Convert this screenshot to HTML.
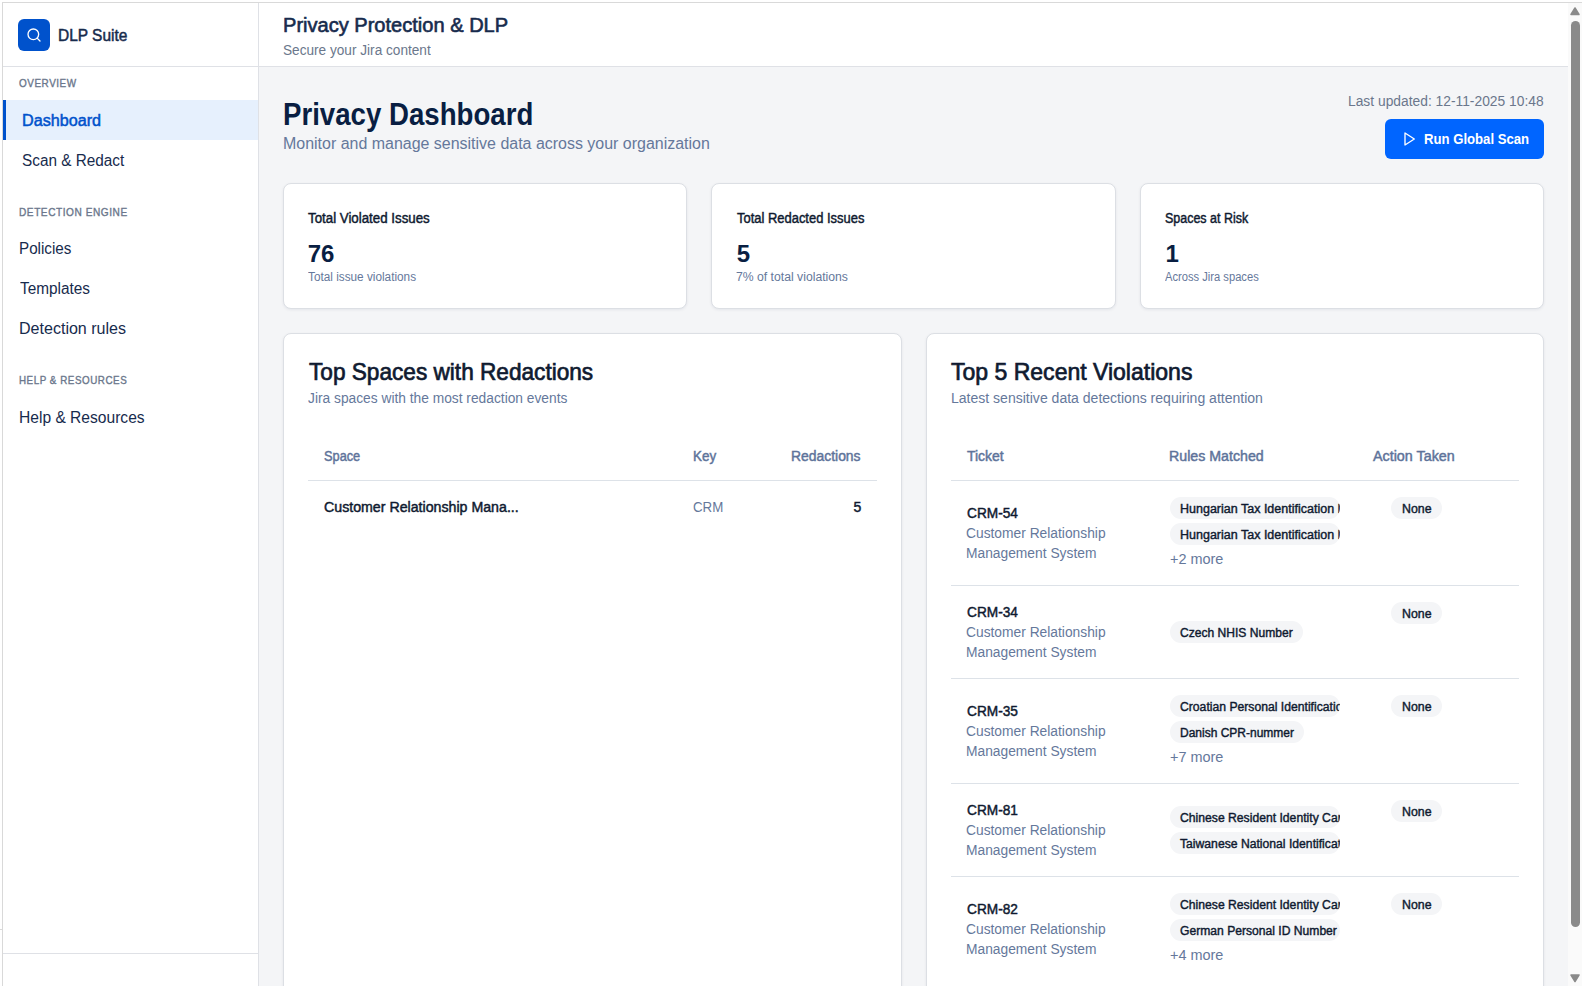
<!DOCTYPE html>
<html><head><meta charset="utf-8"><style>
*{box-sizing:border-box;margin:0;padding:0}
html,body{width:1582px;height:986px;overflow:hidden;background:#fff;font-family:"Liberation Sans",sans-serif}
.a{position:absolute}
.tx{position:absolute;white-space:nowrap;transform-origin:0 0}
.card{position:absolute;background:#fff;border:1px solid #DCDFE4;border-radius:8px;box-shadow:0 1px 3px rgba(9,30,66,0.07)}
.hl{position:absolute;height:1px;background:#DDE2E8}
.chip{position:absolute;height:22px;border-radius:11px;background:#F4F5F7;overflow:hidden;white-space:nowrap}
.ct{position:absolute;white-space:nowrap;transform-origin:0 0;font-size:12px;line-height:12px;font-weight:400;-webkit-text-stroke:0.4px #0F1A30;color:#0F1A30}
</style></head><body>
<div class="a" style="left:2px;top:2px;width:1580px;height:1px;background:#D9D9D9"></div>
<div class="a" style="left:2px;top:2px;width:1px;height:984px;background:#D9D9D9"></div>
<div class="a" style="left:0;top:929px;width:2px;height:1px;background:#D9D9D9"></div>
<div class="a" style="left:258px;top:3px;width:1px;height:983px;background:#DFE1E6"></div>
<div class="a" style="left:3px;top:66px;width:255px;height:1px;background:#DFE1E6"></div>
<div class="a" style="left:3px;top:953px;width:255px;height:1px;background:#DFE1E6"></div>
<div class="a" style="left:18px;top:19px;width:32px;height:32px;border-radius:6px;background:#0052CC"></div>
<svg class="a" style="left:26px;top:27px" width="16" height="16" viewBox="0 0 24 24" fill="none" stroke="#fff" stroke-width="2" stroke-linecap="round" stroke-linejoin="round"><circle cx="11" cy="11" r="8"/><path d="M21 21l-4.35-4.35"/></svg>
<div class="a" style="left:3px;top:100px;width:255px;height:40px;background:#E6F0FD"></div>
<div class="a" style="left:3px;top:100px;width:3px;height:40px;background:#0052CC"></div>
<div class="a" style="left:259px;top:66px;width:1309px;height:1px;background:#DFE1E6"></div>
<div class="a" style="left:259px;top:67px;width:1309px;height:919px;background:#F4F5F7"></div>
<div class="a" style="left:1568px;top:3px;width:14px;height:983px;background:#FAFAFA"></div>
<svg class="a" style="left:1568px;top:3px" width="14" height="983"><path d="M7 5 L11 11.5 L3 11.5 Z" fill="#8A8A8A" stroke="#8A8A8A" stroke-width="1.5" stroke-linejoin="round"/><rect x="3" y="18" width="9" height="906" rx="4.5" fill="#8A8A8A"/><path d="M7 978.5 L11 972 L3 972 Z" fill="#8A8A8A" stroke="#8A8A8A" stroke-width="1.5" stroke-linejoin="round"/></svg>
<div class="a" style="left:1385px;top:119px;width:159px;height:40px;border-radius:6px;background:#0065FF"></div>
<svg class="a" style="left:1401px;top:131px" width="16" height="16" viewBox="0 0 24 24" fill="none" stroke="#fff" stroke-width="2" stroke-linecap="round" stroke-linejoin="round"><polygon points="6 3 20 12 6 21 6 3"/></svg>
<div class="card" style="left:283px;top:183px;width:404px;height:126px"></div>
<div class="card" style="left:711px;top:183px;width:405px;height:126px"></div>
<div class="card" style="left:1140px;top:183px;width:404px;height:126px"></div>
<div class="card" style="left:283px;top:333px;width:619px;height:700px"></div>
<div class="card" style="left:926px;top:333px;width:618px;height:700px"></div>
<div class="hl" style="left:308px;top:480px;width:569px"></div>
<div class="hl" style="left:951px;top:480px;width:568px"></div>
<div class="hl" style="left:951px;top:585px;width:568px"></div>
<div class="hl" style="left:951px;top:678px;width:568px"></div>
<div class="hl" style="left:951px;top:783px;width:568px"></div>
<div class="hl" style="left:951px;top:876px;width:568px"></div>
<div class="chip" style="left:1170px;top:497px;width:170px"><div class="ct" style="left:9.66px;top:6px;transform:scaleX(1.0421)">Hungarian Tax Identification Number</div></div>
<div class="chip" style="left:1170px;top:523px;width:170px"><div class="ct" style="left:9.66px;top:6px;transform:scaleX(1.0421)">Hungarian Tax Identification Number</div></div>
<div class="chip" style="left:1391px;top:497px;width:51px"><div class="ct" style="left:11px;top:6px;transform:scaleX(1.0283)">None</div></div>
<div class="chip" style="left:1170px;top:621.0px;width:132.7px"><div class="ct" style="left:9.69px;top:6px;transform:scaleX(1.0060)">Czech NHIS Number</div></div>
<div class="chip" style="left:1391px;top:602px;width:51px"><div class="ct" style="left:11px;top:6px;transform:scaleX(1.0283)">None</div></div>
<div class="chip" style="left:1170px;top:695px;width:170px"><div class="ct" style="left:9.69px;top:6px;transform:scaleX(1.0144)">Croatian Personal Identification Number</div></div>
<div class="chip" style="left:1170px;top:721px;width:134.0px"><div class="ct" style="left:9.70px;top:6px;transform:scaleX(0.9997)">Danish CPR-nummer</div></div>
<div class="chip" style="left:1391px;top:695px;width:51px"><div class="ct" style="left:11px;top:6px;transform:scaleX(1.0283)">None</div></div>
<div class="chip" style="left:1170px;top:806.0px;width:170px"><div class="ct" style="left:9.69px;top:6px;transform:scaleX(1.0144)">Chinese Resident Identity Card</div></div>
<div class="chip" style="left:1170px;top:832.0px;width:170px"><div class="ct" style="left:9.69px;top:6px;transform:scaleX(1.0144)">Taiwanese National Identification</div></div>
<div class="chip" style="left:1391px;top:800px;width:51px"><div class="ct" style="left:11px;top:6px;transform:scaleX(1.0283)">None</div></div>
<div class="chip" style="left:1170px;top:893px;width:170px"><div class="ct" style="left:9.69px;top:6px;transform:scaleX(1.0144)">Chinese Resident Identity Card</div></div>
<div class="chip" style="left:1170px;top:919px;width:170px"><div class="ct" style="left:9.69px;top:6px;transform:scaleX(1.0097)">German Personal ID Number</div></div>
<div class="chip" style="left:1391px;top:893px;width:51px"><div class="ct" style="left:11px;top:6px;transform:scaleX(1.0283)">None</div></div>
<div class="tx" style="left:58.33px;top:27.9px;font-size:16px;line-height:16px;letter-spacing:0px;font-weight:400;-webkit-text-stroke:0.500px #172B4D;color:#172B4D;transform:scaleX(0.9671)">DLP Suite</div>
<div class="tx" style="left:19.2px;top:78px;font-size:11px;line-height:11px;letter-spacing:0.6px;font-weight:400;-webkit-text-stroke:0.375px #6B778C;color:#6B778C;transform:scaleX(0.9031)">OVERVIEW</div>
<div class="tx" style="left:21.69px;top:113px;font-size:16px;line-height:16px;letter-spacing:0px;font-weight:400;-webkit-text-stroke:0.500px #0052CC;color:#0052CC;transform:scaleX(1.0091)">Dashboard</div>
<div class="tx" style="left:21.54px;top:152.5px;font-size:16px;line-height:16px;letter-spacing:0px;font-weight:400;color:#172B4D;transform:scaleX(0.9575)">Scan &amp; Redact</div>
<div class="tx" style="left:18.73px;top:207px;font-size:11px;line-height:11px;letter-spacing:0.6px;font-weight:400;-webkit-text-stroke:0.375px #6B778C;color:#6B778C;transform:scaleX(0.9184)">DETECTION ENGINE</div>
<div class="tx" style="left:18.75px;top:241px;font-size:16px;line-height:16px;letter-spacing:0px;font-weight:400;color:#172B4D;transform:scaleX(0.95)">Policies</div>
<div class="tx" style="left:19.7px;top:281px;font-size:16px;line-height:16px;letter-spacing:0px;font-weight:400;color:#172B4D;transform:scaleX(0.9603)">Templates</div>
<div class="tx" style="left:18.7px;top:321px;font-size:16px;line-height:16px;letter-spacing:0px;font-weight:400;color:#172B4D;transform:scaleX(1.0029)">Detection rules</div>
<div class="tx" style="left:18.61px;top:375px;font-size:11px;line-height:11px;letter-spacing:0.6px;font-weight:400;-webkit-text-stroke:0.375px #6B778C;color:#6B778C;transform:scaleX(0.8924)">HELP &amp; RESOURCES</div>
<div class="tx" style="left:18.53px;top:409.6px;font-size:16px;line-height:16px;letter-spacing:0px;font-weight:400;color:#172B4D;transform:scaleX(0.9742)">Help &amp; Resources</div>
<div class="tx" style="left:282.7px;top:14.9px;font-size:20px;line-height:20px;letter-spacing:0px;font-weight:400;-webkit-text-stroke:0.600px #172B4D;color:#172B4D;transform:scaleX(1.0027)">Privacy Protection &amp; DLP</div>
<div class="tx" style="left:282.73px;top:43px;font-size:14px;line-height:14px;letter-spacing:0px;font-weight:400;color:#6B778C;transform:scaleX(0.9735)">Secure your Jira content</div>
<div class="tx" style="left:283.32px;top:98.9px;font-size:31px;line-height:31px;letter-spacing:0px;font-weight:700;color:#091E42;transform:scaleX(0.8913)">Privacy Dashboard</div>
<div class="tx" style="left:283.0px;top:136px;font-size:16px;line-height:16px;letter-spacing:0px;font-weight:400;color:#65789B;transform:scaleX(0.9977)">Monitor and manage sensitive data across your organization</div>
<div class="tx" style="left:1348.01px;top:93.7px;font-size:14px;line-height:14px;letter-spacing:0px;font-weight:400;color:#6B778C;transform:scaleX(0.9868)">Last updated: 12-11-2025 10:48</div>
<div class="tx" style="left:1424.06px;top:132px;font-size:14px;line-height:14px;letter-spacing:0px;font-weight:700;color:#ffffff;transform:scaleX(0.9382)">Run Global Scan</div>
<div class="tx" style="left:308.3px;top:210.8px;font-size:14px;line-height:14px;letter-spacing:0px;font-weight:400;-webkit-text-stroke:0.450px #0F1A30;color:#0F1A30;transform:scaleX(0.95)">Total Violated Issues</div>
<div class="tx" style="left:307.7px;top:241.9px;font-size:24px;line-height:24px;letter-spacing:0px;font-weight:700;color:#091E42;transform:scaleX(1)">76</div>
<div class="tx" style="left:307.6px;top:270.9px;font-size:12px;line-height:12px;letter-spacing:0px;font-weight:400;color:#65789B;transform:scaleX(0.9818)">Total issue violations</div>
<div class="tx" style="left:736.6px;top:210.8px;font-size:14px;line-height:14px;letter-spacing:0px;font-weight:400;-webkit-text-stroke:0.450px #0F1A30;color:#0F1A30;transform:scaleX(0.9246)">Total Redacted Issues</div>
<div class="tx" style="left:736.8px;top:241.9px;font-size:24px;line-height:24px;letter-spacing:0px;font-weight:700;color:#091E42;transform:scaleX(1)">5</div>
<div class="tx" style="left:736.08px;top:270.9px;font-size:12px;line-height:12px;letter-spacing:0px;font-weight:400;color:#65789B;transform:scaleX(1.0174)">7% of total violations</div>
<div class="tx" style="left:1165.2px;top:210.8px;font-size:14px;line-height:14px;letter-spacing:0px;font-weight:400;-webkit-text-stroke:0.450px #0F1A30;color:#0F1A30;transform:scaleX(0.8904)">Spaces at Risk</div>
<div class="tx" style="left:1165.6px;top:241.9px;font-size:24px;line-height:24px;letter-spacing:0px;font-weight:700;color:#091E42;transform:scaleX(1)">1</div>
<div class="tx" style="left:1165.2px;top:270.9px;font-size:12px;line-height:12px;letter-spacing:0px;font-weight:400;color:#65789B;transform:scaleX(0.931)">Across Jira spaces</div>
<div class="tx" style="left:308.7px;top:360.1px;font-size:24px;line-height:24px;letter-spacing:0px;font-weight:400;-webkit-text-stroke:0.700px #0F1A30;color:#0F1A30;transform:scaleX(0.9425)">Top Spaces with Redactions</div>
<div class="tx" style="left:308.4px;top:391.2px;font-size:14px;line-height:14px;letter-spacing:0px;font-weight:400;color:#65789B;transform:scaleX(0.9833)">Jira spaces with the most redaction events</div>
<div class="tx" style="left:324.3px;top:448.9px;font-size:14px;line-height:14px;letter-spacing:0px;font-weight:400;-webkit-text-stroke:0.450px #5E739A;color:#5E739A;transform:scaleX(0.9125)">Space</div>
<div class="tx" style="left:692.74px;top:448.9px;font-size:14px;line-height:14px;letter-spacing:0px;font-weight:400;-webkit-text-stroke:0.450px #5E739A;color:#5E739A;transform:scaleX(0.9609)">Key</div>
<div class="tx" style="left:790.81px;top:448.9px;font-size:14px;line-height:14px;letter-spacing:0px;font-weight:400;-webkit-text-stroke:0.450px #5E739A;color:#5E739A;transform:scaleX(0.9928)">Redactions</div>
<div class="tx" style="left:324.2px;top:499.7px;font-size:14px;line-height:14px;letter-spacing:0px;font-weight:400;-webkit-text-stroke:0.450px #0F1A30;color:#0F1A30;transform:scaleX(1.0131)">Customer Relationship Mana...</div>
<div class="tx" style="left:692.75px;top:499.7px;font-size:14px;line-height:14px;letter-spacing:0px;font-weight:400;color:#65789B;transform:scaleX(0.95)">CRM</div>
<div class="tx" style="left:853.6px;top:499.7px;font-size:14px;line-height:14px;letter-spacing:0px;font-weight:400;-webkit-text-stroke:0.450px #0F1A30;color:#0F1A30;transform:scaleX(1)">5</div>
<div class="tx" style="left:951.2px;top:360.1px;font-size:24px;line-height:24px;letter-spacing:0px;font-weight:400;-webkit-text-stroke:0.700px #0F1A30;color:#0F1A30;transform:scaleX(0.959)">Top 5 Recent Violations</div>
<div class="tx" style="left:951.0px;top:391.2px;font-size:14px;line-height:14px;letter-spacing:0px;font-weight:400;color:#65789B;transform:scaleX(1.0019)">Latest sensitive data detections requiring attention</div>
<div class="tx" style="left:967.2px;top:448.9px;font-size:14px;line-height:14px;letter-spacing:0px;font-weight:400;-webkit-text-stroke:0.450px #5E739A;color:#5E739A;transform:scaleX(0.9973)">Ticket</div>
<div class="tx" style="left:1168.79px;top:448.9px;font-size:14px;line-height:14px;letter-spacing:0px;font-weight:400;-webkit-text-stroke:0.450px #5E739A;color:#5E739A;transform:scaleX(1.0141)">Rules Matched</div>
<div class="tx" style="left:1373.0px;top:448.9px;font-size:14px;line-height:14px;letter-spacing:0px;font-weight:400;-webkit-text-stroke:0.450px #5E739A;color:#5E739A;transform:scaleX(1.0228)">Action Taken</div>
<div class="tx" style="left:967.2px;top:505.7px;font-size:14px;line-height:14px;letter-spacing:0px;font-weight:400;-webkit-text-stroke:0.450px #0F1A30;color:#0F1A30;transform:scaleX(0.9769)">CRM-54</div>
<div class="tx" style="left:966.01px;top:526.0px;font-size:14px;line-height:14px;letter-spacing:0px;font-weight:400;color:#65789B;transform:scaleX(0.9857)">Customer Relationship</div>
<div class="tx" style="left:966.01px;top:545.6px;font-size:14px;line-height:14px;letter-spacing:0px;font-weight:400;color:#65789B;transform:scaleX(0.9857)">Management System</div>
<div class="tx" style="left:1169.77px;top:552px;font-size:14px;line-height:14px;letter-spacing:0px;font-weight:400;color:#65789B;transform:scaleX(1.032)">+2 more</div>
<div class="tx" style="left:967.2px;top:604.7px;font-size:14px;line-height:14px;letter-spacing:0px;font-weight:400;-webkit-text-stroke:0.450px #0F1A30;color:#0F1A30;transform:scaleX(0.9769)">CRM-34</div>
<div class="tx" style="left:966.01px;top:625.0px;font-size:14px;line-height:14px;letter-spacing:0px;font-weight:400;color:#65789B;transform:scaleX(0.9857)">Customer Relationship</div>
<div class="tx" style="left:966.01px;top:644.6px;font-size:14px;line-height:14px;letter-spacing:0px;font-weight:400;color:#65789B;transform:scaleX(0.9857)">Management System</div>
<div class="tx" style="left:967.2px;top:703.7px;font-size:14px;line-height:14px;letter-spacing:0px;font-weight:400;-webkit-text-stroke:0.450px #0F1A30;color:#0F1A30;transform:scaleX(0.9769)">CRM-35</div>
<div class="tx" style="left:966.01px;top:724.0px;font-size:14px;line-height:14px;letter-spacing:0px;font-weight:400;color:#65789B;transform:scaleX(0.9857)">Customer Relationship</div>
<div class="tx" style="left:966.01px;top:743.6px;font-size:14px;line-height:14px;letter-spacing:0px;font-weight:400;color:#65789B;transform:scaleX(0.9857)">Management System</div>
<div class="tx" style="left:1169.77px;top:750px;font-size:14px;line-height:14px;letter-spacing:0px;font-weight:400;color:#65789B;transform:scaleX(1.032)">+7 more</div>
<div class="tx" style="left:967.2px;top:802.7px;font-size:14px;line-height:14px;letter-spacing:0px;font-weight:400;-webkit-text-stroke:0.450px #0F1A30;color:#0F1A30;transform:scaleX(0.9769)">CRM-81</div>
<div class="tx" style="left:966.01px;top:823.0px;font-size:14px;line-height:14px;letter-spacing:0px;font-weight:400;color:#65789B;transform:scaleX(0.9857)">Customer Relationship</div>
<div class="tx" style="left:966.01px;top:842.6px;font-size:14px;line-height:14px;letter-spacing:0px;font-weight:400;color:#65789B;transform:scaleX(0.9857)">Management System</div>
<div class="tx" style="left:967.2px;top:901.7px;font-size:14px;line-height:14px;letter-spacing:0px;font-weight:400;-webkit-text-stroke:0.450px #0F1A30;color:#0F1A30;transform:scaleX(0.9769)">CRM-82</div>
<div class="tx" style="left:966.01px;top:922.0px;font-size:14px;line-height:14px;letter-spacing:0px;font-weight:400;color:#65789B;transform:scaleX(0.9857)">Customer Relationship</div>
<div class="tx" style="left:966.01px;top:941.6px;font-size:14px;line-height:14px;letter-spacing:0px;font-weight:400;color:#65789B;transform:scaleX(0.9857)">Management System</div>
<div class="tx" style="left:1169.77px;top:948px;font-size:14px;line-height:14px;letter-spacing:0px;font-weight:400;color:#65789B;transform:scaleX(1.032)">+4 more</div>
</body></html>
